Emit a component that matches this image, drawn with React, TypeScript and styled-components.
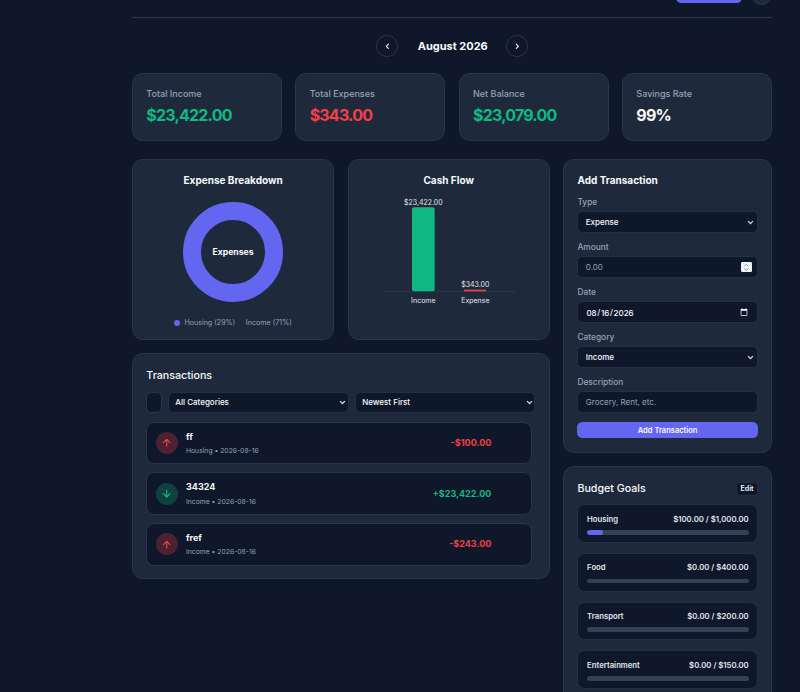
import styled, { createGlobalStyle } from "styled-components";
import { ArrowDown, ArrowUp, ChevronLeft, ChevronRight } from "lucide-react";

const GlobalStyle = createGlobalStyle`
  * {
    box-sizing: border-box;
  }
  html, body {
    margin: 0;
    height: 692px;
    overflow: hidden;
    background: #0f172a;
  }
  body {
    font-family: Inter, "Liberation Sans", sans-serif;
    color: #f8fafc;
  }
`;

const chevron =
  "url(\"data:image/svg+xml,%3Csvg xmlns='http://www.w3.org/2000/svg' viewBox='0 0 10 10'%3E%3Cpath d='M1.5 3l3.5 3.5L8.5 3' fill='none' stroke='%23cbd5e1' stroke-width='1.8'/%3E%3C/svg%3E\")";

// the reference is a 1200px wide page shown at 2/3 scale, already scrolled a bit
const Page = styled.div`
  zoom: 0.6667;
  width: 960px;
  margin-left: 198px;
`;

const Header = styled.header`
  display: flex;
  justify-content: flex-end;
  align-items: flex-end;
  gap: 13px;
  height: 27px;
  padding-bottom: 21px;
  border-bottom: 1px solid #2b3749;
`;

const PrimarySmall = styled.div`
  width: 99px;
  height: 30px;
  flex: none;
  background: #6366f1;
  border-radius: 8px;
`;

const Avatar = styled.div`
  width: 32px;
  height: 32px;
  flex: none;
  margin-bottom: -3px;
  background: #1e293b;
  border: 1px solid #2b3749;
  border-radius: 50%;
`;

const MonthNav = styled.div`
  display: flex;
  justify-content: center;
  align-items: center;
  gap: 30px;
  height: 82px;
  padding-top: 2px;
`;

const MonthTitle = styled.h2`
  margin: 0;
  font-size: 16.5px;
  font-weight: 700;
  width: 103px;
  white-space: nowrap;
  text-align: center;
  color: #f8fafc;
`;

const RoundButton = styled.button`
  display: flex;
  align-items: center;
  justify-content: center;
  width: 32px;
  height: 32px;
  padding: 0;
  background: transparent;
  border: 1px solid #2b3749;
  border-radius: 50%;
  color: #f8fafc;
`;

const StatGrid = styled.section`
  display: grid;
  grid-template-columns: repeat(4, 1fr);
  gap: 20px;
  margin-bottom: 27px;
`;

const Card = styled.div`
  background: #1e293b;
  border: 1px solid #2b3749;
  border-radius: 16px;
  padding: 20px;
`;

const StatCard = styled(Card)`
  height: 102px;
  padding-top: 21px;
`;

const StatLabel = styled.div`
  font-size: 13.5px;
  font-weight: 500;
  line-height: 18px;
  margin-bottom: 8px;
  color: #94a3b8;
`;

const StatValue = styled.div<{ $tone: string }>`
  font-size: 24px;
  font-weight: 700;
  line-height: 32px;
  letter-spacing: -1.2px;
  color: ${(p) => p.$tone};
`;

const MainGrid = styled.div`
  display: grid;
  grid-template-columns: minmax(0, 2fr) minmax(0, 1fr);
  gap: 20px;
  align-items: start;
`;

const Column = styled.div`
  display: flex;
  flex-direction: column;
  gap: 20px;
  min-width: 0;
`;

const ChartRow = styled.div`
  display: grid;
  grid-template-columns: repeat(2, minmax(0, 1fr));
  gap: 20px;
`;

const ChartCard = styled(Card)`
  height: 272px;
  padding-top: 19px;
  text-align: center;
`;

const ChartTitle = styled.h3`
  margin: 0;
  font-size: 15px;
  font-weight: 700;
  line-height: 24px;
  color: #f8fafc;
`;

const Donut = styled.svg`
  display: block;
  margin: 21px auto 0;
`;

const Legend = styled.div`
  display: flex;
  justify-content: center;
  gap: 16px;
  margin-top: 23px;
  font-size: 10.7px;
  line-height: 16px;
  color: #94a3b8;
`;

const LegendItem = styled.span`
  display: flex;
  align-items: center;
  gap: 6px;
`;

const LegendDot = styled.i`
  width: 9px;
  height: 9px;
  border-radius: 50%;
  background: #6366f1;
`;

const Bars = styled.svg`
  display: block;
  margin-top: 8px;
`;

const TransactionsCard = styled(Card)`
  padding-bottom: 18px;
`;

const SectionTitle = styled.h3`
  margin: 0;
  font-size: 16px;
  font-weight: 500;
  line-height: 24px;
  color: #f8fafc;
`;

const Filters = styled.div`
  display: flex;
  gap: 10px;
  margin: 12px 0 13px;
`;

const SearchBox = styled.input`
  width: 23px;
  height: 32px;
  flex: none;
  padding: 0;
  background: #0f172a;
  border: 1px solid #2b3749;
  border-radius: 8px;
`;

const selectLook = `
  appearance: none;
  background-color: #0f172a;
  background-image: ${chevron};
  background-repeat: no-repeat;
  background-size: 10px 10px;
  border: 1px solid #243044;
  border-radius: 8px;
  color: #f8fafc;
  font: 500 12px Inter, sans-serif;
`;

const FilterSelect = styled.select`
  ${selectLook}
  flex: 1;
  min-width: 0;
  height: 32px;
  padding: 0 9px;
  background-position: right 3px center;
`;

const TxList = styled.div`
  display: flex;
  flex-direction: column;
  gap: 12px;
  width: 578px;
`;

const TxRow = styled.div`
  display: flex;
  align-items: center;
  height: 64px;
  padding: 0 59px 0 13px;
  background: #0f172a;
  border: 1px solid #2b3749;
  border-radius: 12px;
`;

const TxIcon = styled.div<{ $tone: string }>`
  display: flex;
  align-items: center;
  justify-content: center;
  width: 33px;
  height: 33px;
  margin-right: 12px;
  border-radius: 50%;
  color: ${(p) => p.$tone};
  background: ${(p) => p.$tone}44;
`;

const TxInfo = styled.div`
  flex: 1;
`;

const TxName = styled.div`
  font-size: 13.5px;
  font-weight: 700;
  line-height: 18px;
  margin-bottom: 5px;
  color: #f8fafc;
`;

const TxMeta = styled.div`
  font-size: 10.2px;
  line-height: 14px;
  color: #94a3b8;
`;

const TxAmount = styled.div<{ $tone: string }>`
  font-size: 13.5px;
  font-weight: 700;
  margin-top: -1px;
  color: ${(p) => p.$tone};
`;

const FormCard = styled(Card)`
  height: 441px;
  padding-top: 19px;
  display: flex;
  flex-direction: column;
  gap: 13px;
`;

const FieldLabel = styled.label`
  display: block;
  font-size: 12.5px;
  font-weight: 500;
  line-height: 17px;
  margin-bottom: 4.5px;
  color: #94a3b8;
`;

const inputLook = `
  display: block;
  width: 100%;
  height: 33px;
  background: #0f172a;
  border: 1px solid #243044;
  border-radius: 8px;
  color: #f8fafc;
  font: 500 12px Inter, sans-serif;
`;

const FormSelect = styled.select`
  ${selectLook}
  display: block;
  width: 100%;
  height: 33px;
  padding: 0 11px;
  background-position: right 5px center;
`;

const FormInput = styled.input`
  ${inputLook}
  padding: 0 11px;

  &::placeholder {
    color: #94a3b8;
    font-weight: 400;
  }
  &::-webkit-inner-spin-button {
    appearance: none;
  }
`;

const DateInput = styled(FormInput)`
  color-scheme: dark;
`;

const AmountBox = styled.div`
  position: relative;
`;

const Spinner = styled.svg`
  position: absolute;
  top: 8px;
  right: 9px;
  width: 16px;
  height: 16px;
  background: #eef1f5;
  border-radius: 2px;
`;

const SubmitButton = styled.button`
  display: block;
  width: 100%;
  height: 28px;
  background: #6366f1;
  border: 0;
  border-radius: 8px;
  color: #f8fafc;
  font: 600 11.3px Inter, sans-serif;
`;

const BudgetHead = styled.div`
  display: flex;
  justify-content: space-between;
  align-items: center;
  margin-bottom: 11px;
  padding-top: 1px;
`;

const EditButton = styled.button`
  width: 32px;
  height: 20px;
  padding: 0;
  background: #0f172a;
  border: 1px solid #243044;
  border-radius: 5px;
  color: #f8fafc;
  font: 600 10.5px Inter, sans-serif;
`;

const BudgetList = styled.div`
  display: flex;
  flex-direction: column;
  gap: 15px;
`;

const BudgetItem = styled.div`
  height: 58px;
  padding: 14px 12px 0 13px;
  background: #0f172a;
  border: 1px solid #243044;
  border-radius: 12px;
`;

const BudgetLine = styled.div`
  display: flex;
  justify-content: space-between;
  font-size: 11.6px;
  font-weight: 600;
  line-height: 16px;
  margin-bottom: 7px;
  color: #e2e8f0;
`;

const BudgetTrack = styled.div`
  height: 7px;
  border-radius: 4px;
  background: #334155;
  overflow: hidden;
`;

const BudgetFill = styled.div`
  height: 100%;
  border-radius: 4px;
  background: #6366f1;
`;

const green = "#10b981";
const red = "#f43f46";

const stats = [
  { label: "Total Income", value: "$23,422.00", tone: green },
  { label: "Total Expenses", value: "$343.00", tone: red },
  { label: "Net Balance", value: "$23,079.00", tone: green },
  { label: "Savings Rate", value: "99%", tone: "#f8fafc" },
];

const transactions = [
  { name: "ff", meta: "Housing • 2026-08-16", amount: "-$100.00", tone: red },
  { name: "34324", meta: "Income • 2026-08-16", amount: "+$23,422.00", tone: green },
  { name: "fref", meta: "Income • 2026-08-16", amount: "-$243.00", tone: red },
];

const budgets = [
  { name: "Housing", spent: 100, limit: 1000, text: "$100.00 / $1,000.00" },
  { name: "Food", spent: 0, limit: 400, text: "$0.00 / $400.00" },
  { name: "Transport", spent: 0, limit: 200, text: "$0.00 / $200.00" },
  { name: "Entertainment", spent: 0, limit: 150, text: "$0.00 / $150.00" },
];

export default function App() {
  return (
    <Page>
      <GlobalStyle />
      <Header>
        <PrimarySmall />
        <Avatar />
      </Header>

      <MonthNav>
        <RoundButton>
          <ChevronLeft size={13} strokeWidth={3} />
        </RoundButton>
        <MonthTitle>August 2026</MonthTitle>
        <RoundButton>
          <ChevronRight size={13} strokeWidth={3} />
        </RoundButton>
      </MonthNav>

      <StatGrid>
        {stats.map((s) => (
          <StatCard key={s.label}>
            <StatLabel>{s.label}</StatLabel>
            <StatValue $tone={s.tone}>{s.value}</StatValue>
          </StatCard>
        ))}
      </StatGrid>

      <MainGrid>
        <Column>
          <ChartRow>
            <ChartCard>
              <ChartTitle>Expense Breakdown</ChartTitle>
              <Donut width="150" height="150" viewBox="0 0 150 150">
                <circle cx="75" cy="75" r="61.5" fill="none" stroke="#6366f1" strokeWidth="27" />
                <text x="75" y="79" textAnchor="middle" fontSize="13" fontWeight="700" fill="#f8fafc">
                  Expenses
                </text>
              </Donut>
              <Legend>
                <LegendItem>
                  <LegendDot />
                  Housing (29%)
                </LegendItem>
                <LegendItem>Income (71%)</LegendItem>
              </Legend>
            </ChartCard>
            <ChartCard>
              <ChartTitle>Cash Flow</ChartTitle>
              <Bars width="262" height="180" viewBox="0 0 262 180">
                <line x1="32" x2="230" y1="146" y2="146" stroke="#334155" />
                <rect x="75" y="20" width="34" height="126" rx="3" fill={green} />
                <rect x="153" y="143.5" width="33" height="2.5" fill={red} />
                <g fontSize="10.5" textAnchor="middle" fill="#e2e8f0">
                  <text x="92" y="16.5">$23,422.00</text>
                  <text x="170" y="140">$343.00</text>
                  <text x="92" y="163">Income</text>
                  <text x="170" y="163">Expense</text>
                </g>
              </Bars>
            </ChartCard>
          </ChartRow>

          <TransactionsCard>
            <SectionTitle>Transactions</SectionTitle>
            <Filters>
              <SearchBox />
              <FilterSelect defaultValue="all">
                <option value="all">All Categories</option>
              </FilterSelect>
              <FilterSelect defaultValue="new">
                <option value="new">Newest First</option>
              </FilterSelect>
            </Filters>
            <TxList>
              {transactions.map((t) => (
                <TxRow key={t.name}>
                  <TxIcon $tone={t.tone}>
                    {t.tone === red ? (
                      <ArrowUp size={17} strokeWidth={2.5} />
                    ) : (
                      <ArrowDown size={17} strokeWidth={2.5} />
                    )}
                  </TxIcon>
                  <TxInfo>
                    <TxName>{t.name}</TxName>
                    <TxMeta>{t.meta}</TxMeta>
                  </TxInfo>
                  <TxAmount $tone={t.tone}>{t.amount}</TxAmount>
                </TxRow>
              ))}
            </TxList>
          </TransactionsCard>
        </Column>

        <Column>
          <FormCard>
            <ChartTitle>Add Transaction</ChartTitle>
            <div>
              <FieldLabel>Type</FieldLabel>
              <FormSelect defaultValue="expense">
                <option value="expense">Expense</option>
              </FormSelect>
            </div>
            <div>
              <FieldLabel>Amount</FieldLabel>
              <AmountBox>
                <FormInput type="number" placeholder="0.00" />
                <Spinner viewBox="0 0 16 16">
                  <path
                    d="M5 6.5L8 3.5L11 6.5M5 9.5L8 12.5L11 9.5"
                    fill="none"
                    stroke="#8a94a3"
                    strokeWidth="1.4"
                  />
                </Spinner>
              </AmountBox>
            </div>
            <div>
              <FieldLabel>Date</FieldLabel>
              <DateInput type="date" defaultValue="2026-08-16" />
            </div>
            <div>
              <FieldLabel>Category</FieldLabel>
              <FormSelect defaultValue="income">
                <option value="income">Income</option>
              </FormSelect>
            </div>
            <div>
              <FieldLabel>Description</FieldLabel>
              <FormInput placeholder="Grocery, Rent, etc." />
            </div>
            <SubmitButton>Add Transaction</SubmitButton>
          </FormCard>

          <Card>
            <BudgetHead>
              <SectionTitle>Budget Goals</SectionTitle>
              <EditButton>Edit</EditButton>
            </BudgetHead>
            <BudgetList>
              {budgets.map((b) => (
                <BudgetItem key={b.name}>
                  <BudgetLine>
                    <span>{b.name}</span>
                    <span>{b.text}</span>
                  </BudgetLine>
                  <BudgetTrack>
                    <BudgetFill style={{ width: `${(b.spent / b.limit) * 100}%` }} />
                  </BudgetTrack>
                </BudgetItem>
              ))}
            </BudgetList>
          </Card>
        </Column>
      </MainGrid>
    </Page>
  );
}
